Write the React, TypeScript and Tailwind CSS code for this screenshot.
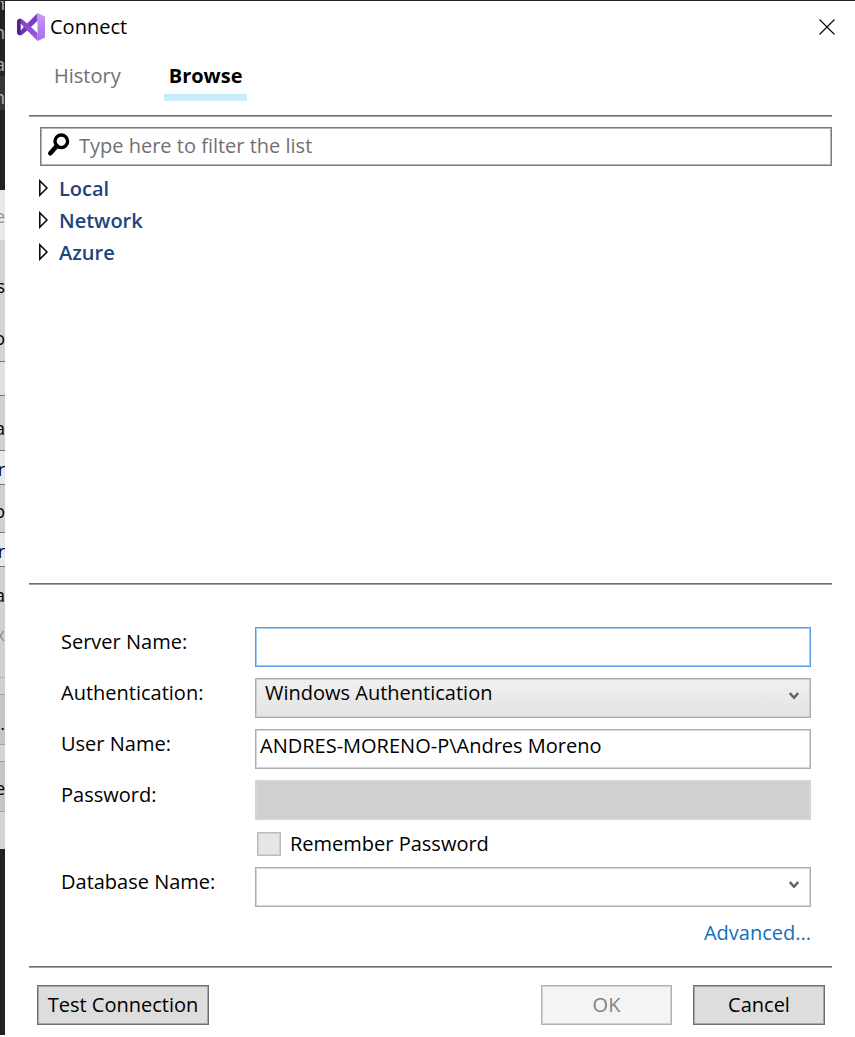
import { useState } from "react";

const FRAGMENTS = [
  { h: "h-[75px]", tone: "bg-[#222222] text-[#b9b4ac]", letters: [{ c: "n", y: "top-[-12px]" }, { c: "n", y: "top-[17px]" }, { c: "a", y: "top-[49px]" }] },
  { h: "h-[34px]", tone: "bg-[#35353c] text-[#b9b4ac]", letters: [{ c: "n", y: "top-[7px]" }] },
  { h: "h-20", tone: "bg-[#222222]", letters: [] },
  { h: "h-[50px]", tone: "bg-[#e8e9eb] text-[#8c8f94]", letters: [{ c: "e", y: "top-[12px]" }] },
  { h: "h-[122px]", tone: "bg-[#d2d3d5] text-black border-b border-[#77787a]", letters: [{ c: "s", y: "top-[32px]" }, { c: "o", y: "top-[84px]" }] },
  { h: "h-[34px]", tone: "bg-[#dfe0e2] border-b border-[#77787a]", letters: [] },
  { h: "h-[55px]", tone: "bg-[#cfd0d2] text-black border-b border-[#77787a]", letters: [{ c: "a", y: "top-[18px]" }] },
  { h: "h-[34px]", tone: "bg-[#e8e9eb] text-black border-b border-[#77787a]", letters: [{ c: "r", y: "top-[4px]" }] },
  { h: "h-12", tone: "bg-[#cfd0d2] text-black border-b border-[#77787a]", letters: [{ c: "o", y: "top-[12px]" }] },
  { h: "h-[34px]", tone: "bg-[#e8e9eb] text-black border-b border-[#77787a]", letters: [{ c: "r", y: "top-[4px]" }] },
  { h: "h-[56px]", tone: "bg-[#cfd0d2] text-black", letters: [{ c: "a", y: "top-[14px]" }] },
  { h: "h-[55px]", tone: "bg-[#cfd0d2] text-[#8c8f94] border-b border-[#b4b5b7]", letters: [{ c: "x", y: "top-[-3px]" }] },
  { h: "h-[17px]", tone: "bg-[#cfd0d2] border-b border-[#a0a1a3]", letters: [] },
  { h: "h-[50px]", tone: "bg-[#c4c5c7] text-black border-b border-[#a0a1a3]", letters: [{ c: ".", y: "top-[14px]" }] },
  { h: "h-[17px]", tone: "bg-[#d4d5d7] border-b border-[#a0a1a3]", letters: [] },
  { h: "h-[50px]", tone: "bg-[#c4c5c7] text-black border-b border-[#a0a1a3]", letters: [{ c: "e", y: "top-[12px]" }] },
  { h: "h-[37px]", tone: "bg-[#d4d5d7]", letters: [] },
];

function BackgroundWindow() {
  return (
    <div aria-hidden="true" className="flex w-[5px] shrink-0 flex-col overflow-hidden pb-0.5">
      {FRAGMENTS.map((f, i) => (
        <div key={i} className={`relative shrink-0 overflow-hidden ${f.h} ${f.tone}`}>
          {f.letters.map((l, j) => (
            <span key={j} className={`absolute right-0 text-lg leading-7 ${l.y}`}>
              {l.c}
            </span>
          ))}
        </div>
      ))}
      <div className="flex-1 bg-[#222222]" />
    </div>
  );
}

function Logo() {
  return (
    <svg viewBox="0 0 28 28" className="size-7" aria-hidden="true">
      <defs>
        <linearGradient id="vs-side" x1="0" y1="0" x2="0" y2="1">
          <stop offset="0" stopColor="#c89bf5" />
          <stop offset="1" stopColor="#a66cf0" />
        </linearGradient>
        <linearGradient id="vs-rise" x1="0" y1="1" x2="1" y2="0">
          <stop offset="0" stopColor="#6a2fae" />
          <stop offset="1" stopColor="#8343c4" />
        </linearGradient>
        <linearGradient id="vs-fall" x1="0" y1="0" x2="1" y2="1">
          <stop offset="0" stopColor="#7b3fbd" />
          <stop offset="1" stopColor="#9a5bdc" />
        </linearGradient>
      </defs>
      <path d="M0 20.6 2.4 22.4 4.8 22 10.2 17.6 20.6 7.8V0L6.8 14 3.7 17.4Z" fill="url(#vs-rise)" />
      <path d="M0 7.4 2.4 5.6 4.8 6 10.2 10.4 20.6 20.2V28L6.8 14 3.7 10.6Z" fill="url(#vs-fall)" />
      <path d="M0 7.4 2.4 5.8 3.7 7V21L2.4 22.2 0 20.6Z" fill="#52218f" />
      <path d="M20.5 0 28 3.4V24.6L20.5 28Z" fill="url(#vs-side)" />
    </svg>
  );
}

function SearchGlyph() {
  return (
    <svg viewBox="0 0 24 24" className="mb-1 size-6 shrink-0" fill="none" stroke="#000" aria-hidden="true">
      <circle cx="15.3" cy="8.3" r="6.3" strokeWidth="3.4" />
      <path d="M10.8 13 4.3 20.2" strokeWidth="4.6" strokeLinecap="round" />
    </svg>
  );
}

function Chevron() {
  return (
    <svg viewBox="0 0 10 8" className="h-2 w-2.5" fill="none" stroke="#606060" strokeWidth="2.4" aria-hidden="true">
      <path d="M0.8 1 5 5.8 9.2 1" />
    </svg>
  );
}

function Divider() {
  return <hr className="mr-[23px] ml-6 h-0.5 border-t border-b border-t-[#6f6f6f] border-b-[#a3a3a3]" />;
}

const FIELD = "h-10 w-full min-w-0 border border-[#abadb3] bg-white px-1 pb-2 shadow-[inset_0_0_0_1px_#d5d6d9] outline-none";
const LABEL = "self-start leading-[30px]";
const BUTTON = "h-10 border border-[#707070] bg-[#dddddd] shadow-[inset_0_0_0_1px_#a6a6a6]";

export default function App() {
  const [filter, setFilter] = useState("");
  const [server, setServer] = useState("");
  const [user, setUser] = useState("ANDRES-MORENO-P\\Andres Moreno");
  const [database, setDatabase] = useState("");

  return (
    <div className="flex min-h-screen border-t border-[#222222] bg-white font-['Open_Sans','Noto_Sans',sans-serif] text-xl text-black">
      <BackgroundWindow />
      <main className="flex min-w-0 flex-1 flex-col">
        <header className="flex items-center pt-2.5 pr-5 pl-3">
          <Logo />
          <h1 className="ml-[5px] leading-8">Connect</h1>
          <button type="button" aria-label="Close" className="ml-auto">
            <svg viewBox="0 0 16 16" className="size-4" stroke="#000" strokeWidth="1.1" aria-hidden="true">
              <path d="M0.5 0.5 15.5 15.5M15.5 0.5 0.5 15.5" />
            </svg>
          </button>
        </header>

        <nav role="tablist" className="mt-[18px] mb-3.5 flex gap-[38px] pl-11">
          <button type="button" role="tab" aria-selected="false" className="border-b-[7px] border-transparent px-[5px] pb-[3px] leading-[30px] text-[#717171]">
            History
          </button>
          <button type="button" role="tab" aria-selected="true" className="border-b-[7px] border-[#c9ecfb] px-[5px] pb-[3px] leading-[30px] font-bold">
            Browse
          </button>
        </nav>
        <Divider />

        <label className="mt-2.5 mr-[23px] ml-[35px] flex h-[39px] items-center border border-[#7b7b7b] pl-[5px] shadow-[inset_0_0_0_1px_#b5b5b5]">
          <SearchGlyph />
          <input
            aria-label="Filter the list"
            placeholder="Type here to filter the list"
            value={filter}
            onChange={(e) => setFilter(e.target.value)}
            className="ml-[9px] min-w-0 flex-1 bg-transparent pb-0.5 outline-none placeholder:text-[#717171]"
          />
        </label>

        <ul className="mt-[7px] flex-1 pl-[33px] font-semibold text-[#1e4480]">
          {["Local", "Network", "Azure"].map((name) => (
            <li key={name}>
              <button type="button" aria-expanded="false" className="flex h-8 items-center gap-[11px]">
                <svg viewBox="0 0 10 18" className="mb-0.5 h-[18px] w-2.5" fill="#fff" stroke="#000" strokeWidth="1.5" aria-hidden="true">
                  <path d="M1.8 1.8V16.2L9 9Z" />
                </svg>
                {name}
              </button>
            </li>
          ))}
        </ul>
        <Divider />

        <form className="mt-[42px] mr-11 mb-[18px] ml-14 grid grid-cols-[194px_1fr] gap-y-[11px]" onSubmit={(e) => e.preventDefault()}>
          <label htmlFor="server" className={LABEL}>Server Name:</label>
          <input
            id="server"
            value={server}
            onChange={(e) => setServer(e.target.value)}
            className="h-10 w-full min-w-0 border border-[#569de5] bg-white px-1 pb-2 shadow-[inset_0_0_0_1px_#a9cdf2] outline-none"
          />

          <label htmlFor="auth" className={LABEL}>Authentication:</label>
          <div className="relative">
            <select
              id="auth"
              className="h-10 w-full appearance-none border border-[#acacac] bg-linear-to-b from-[#f0f0f0] to-[#e3e3e3] pr-8 pb-2.5 pl-[9px] shadow-[inset_0_0_0_1px_#cdcdcd] outline-none"
            >
              <option>Windows Authentication</option>
            </select>
            <span className="pointer-events-none absolute top-3.5 right-3">
              <Chevron />
            </span>
          </div>

          <label htmlFor="user" className={LABEL}>User Name:</label>
          <input id="user" value={user} onChange={(e) => setUser(e.target.value)} className={FIELD} />

          <label htmlFor="password" className={LABEL}>Password:</label>
          <input
            id="password"
            type="password"
            disabled
            className="h-10 w-full min-w-0 border border-[#d3d4d7] bg-[#d0d0d0] px-1 shadow-[inset_0_0_0_1px_#d6d6d9]"
          />

          <label className="col-start-2 ml-0.5 flex h-[25px] items-center gap-[9px]">
            <input
              type="checkbox"
              disabled
              className="size-6 appearance-none border border-[#bcbcbc] bg-[#e6e6e6] shadow-[inset_0_0_0_1px_#d0d0d0]"
            />
            Remember Password
          </label>

          <label htmlFor="database" className={LABEL}>Database Name:</label>
          <div className="flex h-10 border border-[#abadb3] shadow-[inset_0_0_0_1px_#d5d6d9]">
            <input
              id="database"
              value={database}
              onChange={(e) => setDatabase(e.target.value)}
              className="min-w-0 flex-1 bg-transparent px-1 outline-none"
            />
            <button type="button" aria-label="Show databases" className="flex w-8 items-center justify-center pb-1">
              <Chevron />
            </button>
          </div>

          <a href="#advanced" className="col-span-2 justify-self-end leading-[30px] text-[#0e70c0]">
            Advanced...
          </a>
        </form>
        <Divider />

        <footer className="mt-[17px] mb-3 flex gap-[21px] pr-[30px] pl-8">
          <button type="button" className={`mr-auto w-[172px] ${BUTTON}`}>
            Test Connection
          </button>
          <button
            type="button"
            disabled
            className="h-10 w-[131px] border border-[#adb2b5] bg-[#f4f4f4] text-[#838383] shadow-[inset_0_0_0_1px_#d0d3d5]"
          >
            OK
          </button>
          <button type="button" className={`w-[132px] ${BUTTON}`}>
            Cancel
          </button>
        </footer>
      </main>
    </div>
  );
}
